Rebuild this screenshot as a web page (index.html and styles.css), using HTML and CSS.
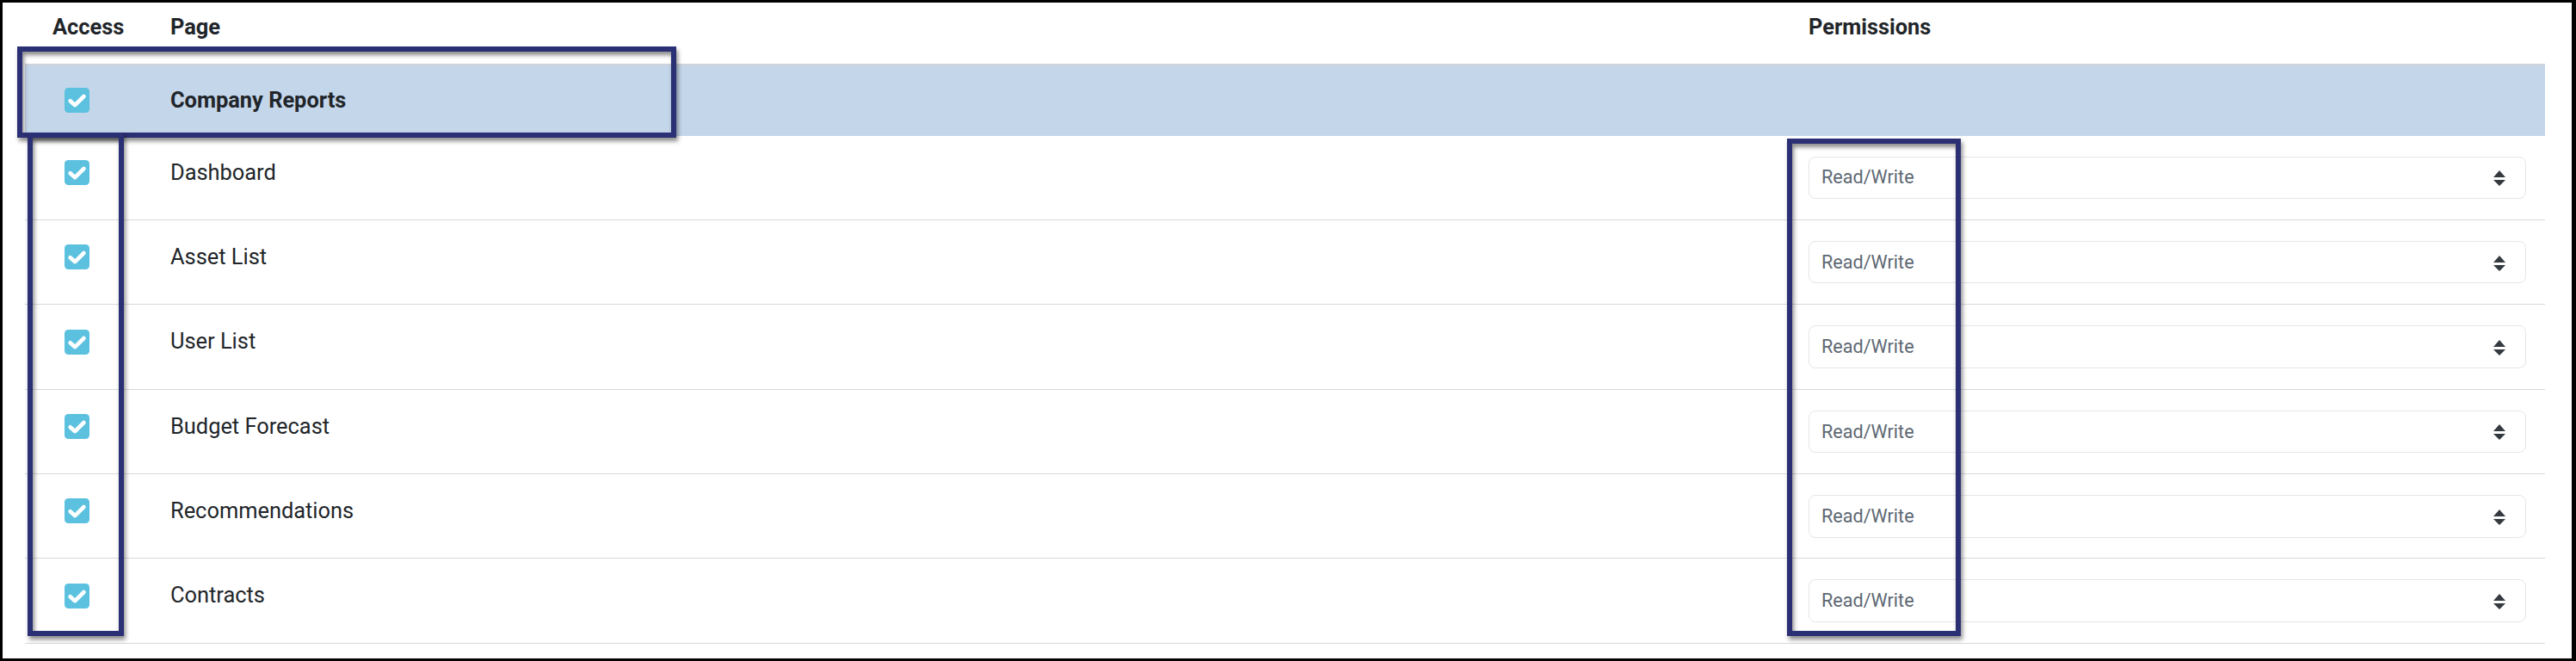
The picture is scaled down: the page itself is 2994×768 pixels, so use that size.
FILE: index.html
```html
<!DOCTYPE html>
<html lang="en">
<head>
<meta charset="utf-8">
<title>Page access</title>
<link rel="stylesheet" href="styles.css">
</head>
<body>
<div class="frame">
  <div class="table">
    <div class="row head">
      <div class="c-access">Access</div>
      <div class="c-page">Page</div>
      <div class="c-perm">Permissions</div>
    </div>
    <div class="row group">
      <div class="c-access cbcell"><svg class="cb" viewBox="0 0 29 29"><rect width="29" height="29" rx="4.5" fill="#5bc1df"/><path d="M6.6 15.2 L12.2 20.2 L22.4 10" fill="none" stroke="#fff" stroke-width="4.6" stroke-linecap="round" stroke-linejoin="round"/></svg></div>
      <div class="c-page">Company Reports</div>
      <div class="c-perm"></div>
    </div>
    <div class="row item">
      <div class="c-access cbcell"><svg class="cb" viewBox="0 0 29 29"><rect width="29" height="29" rx="4.5" fill="#5bc1df"/><path d="M6.6 15.2 L12.2 20.2 L22.4 10" fill="none" stroke="#fff" stroke-width="4.6" stroke-linecap="round" stroke-linejoin="round"/></svg></div>
      <div class="c-page">Dashboard</div>
      <div class="c-perm"><div class="select"><span>Read/Write</span><svg class="arrows" viewBox="0 0 14 18"><path d="M7 0 L14 8 L0 8 Z M0 11 L14 11 L7 18 Z" fill="#343a40"/></svg></div></div>
    </div>
    <div class="row item">
      <div class="c-access cbcell"><svg class="cb" viewBox="0 0 29 29"><rect width="29" height="29" rx="4.5" fill="#5bc1df"/><path d="M6.6 15.2 L12.2 20.2 L22.4 10" fill="none" stroke="#fff" stroke-width="4.6" stroke-linecap="round" stroke-linejoin="round"/></svg></div>
      <div class="c-page">Asset List</div>
      <div class="c-perm"><div class="select"><span>Read/Write</span><svg class="arrows" viewBox="0 0 14 18"><path d="M7 0 L14 8 L0 8 Z M0 11 L14 11 L7 18 Z" fill="#343a40"/></svg></div></div>
    </div>
    <div class="row item">
      <div class="c-access cbcell"><svg class="cb" viewBox="0 0 29 29"><rect width="29" height="29" rx="4.5" fill="#5bc1df"/><path d="M6.6 15.2 L12.2 20.2 L22.4 10" fill="none" stroke="#fff" stroke-width="4.6" stroke-linecap="round" stroke-linejoin="round"/></svg></div>
      <div class="c-page">User List</div>
      <div class="c-perm"><div class="select"><span>Read/Write</span><svg class="arrows" viewBox="0 0 14 18"><path d="M7 0 L14 8 L0 8 Z M0 11 L14 11 L7 18 Z" fill="#343a40"/></svg></div></div>
    </div>
    <div class="row item">
      <div class="c-access cbcell"><svg class="cb" viewBox="0 0 29 29"><rect width="29" height="29" rx="4.5" fill="#5bc1df"/><path d="M6.6 15.2 L12.2 20.2 L22.4 10" fill="none" stroke="#fff" stroke-width="4.6" stroke-linecap="round" stroke-linejoin="round"/></svg></div>
      <div class="c-page">Budget Forecast</div>
      <div class="c-perm"><div class="select"><span>Read/Write</span><svg class="arrows" viewBox="0 0 14 18"><path d="M7 0 L14 8 L0 8 Z M0 11 L14 11 L7 18 Z" fill="#343a40"/></svg></div></div>
    </div>
    <div class="row item">
      <div class="c-access cbcell"><svg class="cb" viewBox="0 0 29 29"><rect width="29" height="29" rx="4.5" fill="#5bc1df"/><path d="M6.6 15.2 L12.2 20.2 L22.4 10" fill="none" stroke="#fff" stroke-width="4.6" stroke-linecap="round" stroke-linejoin="round"/></svg></div>
      <div class="c-page">Recommendations</div>
      <div class="c-perm"><div class="select"><span>Read/Write</span><svg class="arrows" viewBox="0 0 14 18"><path d="M7 0 L14 8 L0 8 Z M0 11 L14 11 L7 18 Z" fill="#343a40"/></svg></div></div>
    </div>
    <div class="row item">
      <div class="c-access cbcell"><svg class="cb" viewBox="0 0 29 29"><rect width="29" height="29" rx="4.5" fill="#5bc1df"/><path d="M6.6 15.2 L12.2 20.2 L22.4 10" fill="none" stroke="#fff" stroke-width="4.6" stroke-linecap="round" stroke-linejoin="round"/></svg></div>
      <div class="c-page">Contracts</div>
      <div class="c-perm"><div class="select"><span>Read/Write</span><svg class="arrows" viewBox="0 0 14 18"><path d="M7 0 L14 8 L0 8 Z M0 11 L14 11 L7 18 Z" fill="#343a40"/></svg></div></div>
    </div>
  </div>
  <div class="mark mark-group"></div>
  <div class="mark mark-access"></div>
  <div class="mark mark-perm"></div>
</div>
</body>
</html>
```
FILE: styles.css
```css
html, body {
  margin: 0;
  padding: 0;
  background: #ffffff;
}

body {
  font-family: Roboto, "Liberation Sans", Arial, sans-serif;
  color: #212529;
}

.frame {
  position: relative;
  box-sizing: border-box;
  width: 2994px;
  height: 768px;
  border: 3px solid #000000;
  border-right-width: 5px;
  overflow: hidden;
  background: #ffffff;
}

.table {
  width: 2929px;
  margin-left: 26px;
}

.row {
  display: grid;
  grid-template-columns: 169px 1904px 1fr;
  box-sizing: border-box;
  font-size: 25.4px;
}

.head {
  height: 72.5px;
  padding-top: 13px;
  line-height: 1.2;
  font-weight: 700;
  border-bottom: 2.5px solid #cfd3d8;
}

.head .c-access {
  padding-left: 32px;
}

.group {
  height: 82px;
  padding-top: 22px;
  line-height: 37.5px;
  font-weight: 700;
  background: #c4d6ea;
}

.item {
  height: 98.4px;
  padding-top: 24px;
  line-height: 37.5px;
  border-bottom: 1.5px solid #d6d9dd;
}

.cbcell {
  padding-left: 46px;
}

.cb {
  display: block;
  width: 29px;
  height: 29px;
  margin-top: 4.3px;
}

.select {
  box-sizing: border-box;
  height: 49.5px;
  margin-right: 22px;
  padding: 0 23px 0 14px;
  display: flex;
  align-items: center;
  justify-content: space-between;
  border: 1.5px solid #e3e6ea;
  border-radius: 8px;
  font-size: 21.6px;
  line-height: 1;
  color: #5d6873;
  background: #ffffff;
}

.arrows {
  display: block;
  width: 14px;
  height: 18px;
  margin-top: 2px;
}

.mark {
  position: absolute;
  box-sizing: border-box;
  border: 6px solid #2b2f73;
  box-shadow: 2px 4px 5px rgba(0, 0, 0, 0.45), inset 2px 4px 5px rgba(0, 0, 0, 0.45);
  pointer-events: none;
}

.mark-group {
  left: 17px;
  top: 51px;
  width: 766px;
  height: 106px;
}

.mark-access {
  left: 29px;
  top: 151px;
  width: 112px;
  height: 585px;
}

.mark-perm {
  left: 2074px;
  top: 158px;
  width: 202px;
  height: 578px;
}
```
